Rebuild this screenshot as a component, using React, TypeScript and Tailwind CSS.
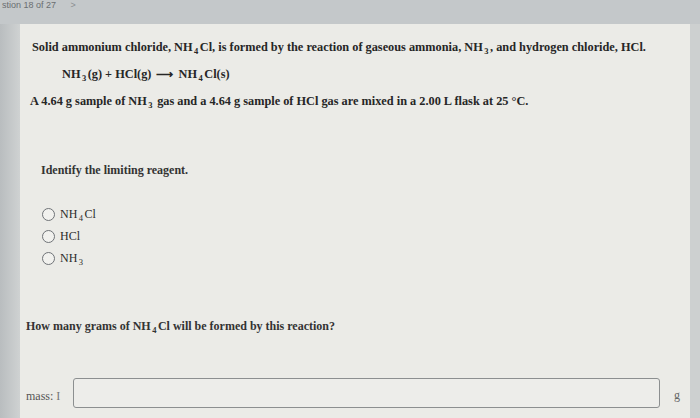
import React from "react";

const Sub = ({ children }: { children: React.ReactNode }) => (
  <sub className="text-[8.5px] relative top-[3px] align-baseline mx-[1.5px]">{children}</sub>
);

function Radio({ children }: { children: React.ReactNode }) {
  return (
    <label className="flex items-center gap-[5px] h-[22px]">
      <span className="w-[13px] h-[13px] rounded-full border-[1.5px] border-[#6f7377] bg-[#f1f1ee]" />
      <span className="text-[12px] text-[#2b2b2b]">{children}</span>
    </label>
  );
}

export default function App() {
  return (
    <div
      className="w-[700px] h-[418px] overflow-hidden bg-[#c4c8ca] flex flex-col text-[#262626]"
      style={{ fontFamily: '"Liberation Serif", "Times New Roman", serif' }}
    >
      <div className="h-[24px] px-[2px] flex items-start">
        <span className="text-[9px] leading-[10px] text-[#6a6e71]" style={{ fontFamily: '"Liberation Sans", Arial, sans-serif' }}>
          stion 18 of 27 <span className="ml-[12px] text-[#8a8e91]">&gt;</span>
        </span>
      </div>
      <div className="flex flex-1">
        <div className="w-[20px] bg-gradient-to-r from-[#b9bdbf] to-[#cfd2d2]" />
        <div className="w-[670px] bg-[#ebebe7] flex flex-col pl-[12px] pr-[8px] pt-[15px]">
          <p className="font-bold text-[12.3px] leading-[16px] whitespace-nowrap">
            Solid ammonium chloride, NH<Sub>4</Sub>Cl, is formed by the reaction of gaseous ammonia, NH<Sub>3</Sub>, and
            hydrogen chloride, HCl.
          </p>
          <p className="font-bold text-[12.3px] leading-[16px] mt-[11px] pl-[30px]">
            NH<Sub>3</Sub>(g) + HCl(g) <span className="inline-block mx-[2px]">⟶</span> NH<Sub>4</Sub>Cl(s)
          </p>
          <p className="font-bold text-[12.3px] leading-[16px] mt-[11px] -ml-[2px] whitespace-nowrap">
            A 4.64 g sample of NH<Sub>3</Sub> gas and a 4.64 g sample of HCl gas are mixed in a 2.00 L flask at 25 °C.
          </p>
          <p className="font-bold text-[12px] leading-[16px] mt-[53px] pl-[9px] text-[#333]">
            Identify the limiting reagent.
          </p>
          <div className="flex flex-col mt-[25px] pl-[10px]">
            <Radio>
              NH<Sub>4</Sub>Cl
            </Radio>
            <Radio>HCl</Radio>
            <Radio>
              NH<Sub>3</Sub>
            </Radio>
          </div>
          <p className="font-bold text-[12px] leading-[16px] mt-[49px] -ml-[6px] text-[#333]">
            How many grams of NH<Sub>4</Sub>Cl will be formed by this reaction?
          </p>
          <div className="flex items-center mt-[44px] -ml-[6px]">
            <span className="text-[12px] text-[#555] w-[47px] pt-[6px]">
              mass: <span className="text-[#777]">I</span>
            </span>
            <div className="w-[587px] h-[30px] border-[1.5px] border-[#8c8f90] rounded-[3px] bg-[#ededea]" />
            <span className="text-[12px] text-[#666] ml-[14px] pt-[4px]">g</span>
          </div>
        </div>
        <div className="flex-1 bg-[#cdd0d0]" />
      </div>
    </div>
  );
}
